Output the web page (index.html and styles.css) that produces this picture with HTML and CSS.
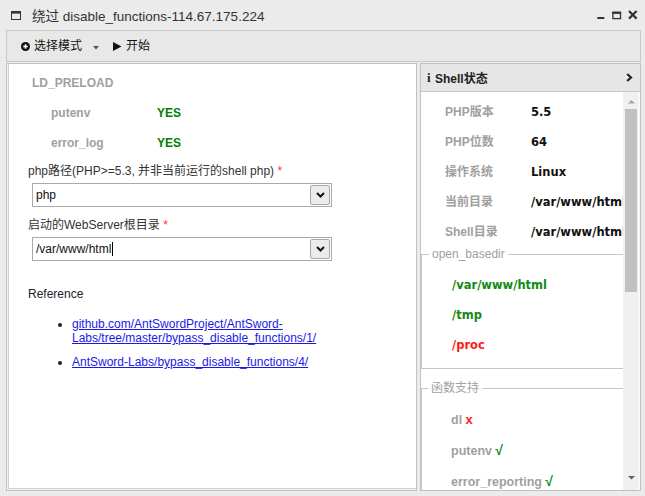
FILE: index.html
```html
<!DOCTYPE html>
<html>
<head>
<meta charset="utf-8">
<link rel="stylesheet" href="styles.css">
</head>
<body>
<div class="win">
  <div class="titlebar">
    <svg class="win-icon" width="10" height="9" viewBox="0 0 10 9"><rect x="0.5" y="0.5" width="9" height="8" fill="none" stroke="#333" stroke-width="1"/><rect x="0" y="0" width="10" height="2.6" fill="#333"/></svg>
    <span class="title">绕过 disable_functions-114.67.175.224</span>
    <svg class="controls" width="42" height="10" viewBox="0 0 42 10">
      <rect x="0.3" y="7" width="7" height="2" fill="#333"/>
      <rect x="15.9" y="2.4" width="7.6" height="6.2" fill="none" stroke="#333" stroke-width="1.3"/>
      <rect x="15.3" y="1.7" width="8.8" height="2.2" fill="#333"/>
      <path d="M32 1 L39.6 8.6 M39.6 1 L32 8.6" stroke="#333" stroke-width="2.2" fill="none"/>
    </svg>
  </div>

  <div class="toolbar">
    <svg class="tb-circle" width="9" height="9" viewBox="0 0 9 9"><circle cx="4.5" cy="4.5" r="4.5" fill="#111"/><path d="M4.5 2.2 V6.8 M2.2 4.5 H6.8" stroke="#fff" stroke-width="1.5"/></svg>
    <span class="tb-text">选择模式</span>
    <svg class="tb-caret" width="6" height="4" viewBox="0 0 6 4"><path d="M0 0 H6 L3 3.5 Z" fill="#555"/></svg>
    <svg class="tb-play" width="9" height="9" viewBox="0 0 9 9"><path d="M0 0 L8.5 4.5 L0 9 Z" fill="#111"/></svg>
    <span class="tb-text">开始</span>
  </div>

  <div class="main">
    <div class="left-cell">
      <div class="sec-title">LD_PRELOAD</div>
      <div class="kv"><span class="k">putenv</span><span class="yes">YES</span></div>
      <div class="kv"><span class="k">error_log</span><span class="yes">YES</span></div>

      <div class="flabel first">php路径(PHP&gt;=5.3, 并非当前运行的shell php) <span class="req">*</span></div>
      <div class="combo"><span class="cval">php</span><span class="cbtn"><svg width="9" height="6" viewBox="0 0 9 6"><path d="M1 1 L4.5 4.5 L8 1" stroke="#111" stroke-width="2" fill="none"/></svg></span></div>

      <div class="flabel">启动的WebServer根目录 <span class="req">*</span></div>
      <div class="combo"><span class="cval">/var/www/html<span class="caret"></span></span><span class="cbtn"><svg width="9" height="6" viewBox="0 0 9 6"><path d="M1 1 L4.5 4.5 L8 1" stroke="#111" stroke-width="2" fill="none"/></svg></span></div>

      <div class="ref-title">Reference</div>
      <ul class="refs">
        <li><a href="#">github.com/AntSwordProject/AntSword-Labs/tree/master/bypass_disable_functions/1/</a></li>
        <li><a href="#">AntSword-Labs/bypass_disable_functions/4/</a></li>
      </ul>
    </div>

    <div class="right-cell">
      <div class="rhead">
        <span class="info-i">i</span>
        <span class="rhead-title">Shell状态</span>
        <svg class="rhead-chev" width="7" height="9" viewBox="0 0 7 9"><path d="M1.2 1 L5 4.5 L1.2 8" stroke="#222" stroke-width="2.2" fill="none"/></svg>
      </div>
      <div class="rbody">
        <div class="rcontent">
          <div class="row"><span class="rk">PHP版本</span><span class="rv">5.5</span></div>
          <div class="row"><span class="rk">PHP位数</span><span class="rv">64</span></div>
          <div class="row"><span class="rk">操作系统</span><span class="rv">Linux</span></div>
          <div class="row"><span class="rk">当前目录</span><span class="rv">/var/www/html</span></div>
          <div class="row"><span class="rk">Shell目录</span><span class="rv">/var/www/html</span></div>

          <fieldset class="fs fs1">
            <legend>open_basedir</legend>
            <div class="item ok">/var/www/html</div>
            <div class="item ok">/tmp</div>
            <div class="item bad">/proc</div>
          </fieldset>

          <fieldset class="fs fs2">
            <legend>函数支持</legend>
            <div class="fn"><span class="fname">dl</span> <span class="no">x</span></div>
            <div class="fn"><span class="fname">putenv</span> <span class="chk">√</span></div>
            <div class="fn"><span class="fname">error_reporting</span> <span class="chk">√</span></div>
          </fieldset>
        </div>
        <div class="sbar">
          <svg class="sb-up" width="7" height="4" viewBox="0 0 7 4"><path d="M0 3.5 L3.5 0 L7 3.5 Z" fill="#a3a3a3"/></svg>
          <div class="sb-thumb"></div>
          <svg class="sb-down" width="7" height="4" viewBox="0 0 7 4"><path d="M0 0 L7 0 L3.5 3.5 Z" fill="#606060"/></svg>
        </div>
      </div>
    </div>
  </div>
</div>
</body>
</html>
```

FILE: styles.css
```css
* { box-sizing: border-box; }
html, body { margin: 0; padding: 0; }
body {
  width: 645px;
  height: 496px;
  overflow: hidden;
  background: #ebebeb;
  font-family: "Liberation Sans", Arial, "Noto Sans CJK SC", sans-serif;
  font-size: 12px;
  color: #222;
}
.win { display: flex; flex-direction: column; height: 496px; }

/* title bar */
.titlebar {
  flex: none;
  height: 30px;
  display: flex;
  align-items: center;
  padding: 0 6px 0 11px;
}
.win-icon { display: block; flex: none; }
.title { margin-left: 11px; font-size: 13.5px; color: #333; white-space: nowrap; }
.controls { display: block; margin-left: auto; flex: none; }

/* toolbar */
.toolbar {
  flex: none;
  height: 32px;
  margin: 0 4px 0 6px;
  border: 1px solid #c8c8c8;
  background: #e8e8e8;
  display: flex;
  align-items: center;
  padding-left: 14px;
  color: #111;
}
.tb-circle { display: block; flex: none; }
.tb-text { margin-left: 4px; font-size: 12px; line-height: 14px; }
.tb-caret { display: block; flex: none; margin-left: 11px; margin-top: 4px; }
.tb-play { display: block; flex: none; margin-left: 14px; }

/* main */
.main {
  flex: none;
  height: 428px;
  margin: 1px 4px 0 6px;
  display: flex;
  gap: 3px;
}
.left-cell {
  width: 411px;
  height: 428px;
  border: 1px solid #c2c2c2;
  background: #fff;
  padding-top: 4px;
  box-shadow: inset 1px -1px 0 #f2f2f2, inset 2px -2px 0 #d2d2d2;
}
.sec-title {
  line-height: 30px;
  padding-left: 25px;
  font-weight: bold;
  color: #a0a0a0;
}
.kv { display: flex; line-height: 30px; padding-left: 44px; font-weight: bold; }
.kv .k { width: 106px; color: #a0a0a0; }
.yes { color: #008000; }

.flabel { line-height: 16px; padding-left: 21px; margin-top: 10px; margin-bottom: 4px; color: #333; }
.flabel.first { margin-top: 5px; }
.req { color: #f33; }
.combo {
  margin-left: 25px;
  width: 300px;
  height: 24px;
  border: 1px solid #aaa;
  display: flex;
  align-items: center;
  justify-content: space-between;
  padding: 0 1px 0 3px;
  background: #fff;
}
.cval { color: #111; font-size: 12px; display: flex; align-items: center; }
.caret { display: inline-block; width: 1px; height: 14px; background: #000; margin-left: 1px; }
.cbtn {
  width: 20px;
  height: 20px;
  border: 1px solid #a8a8a8;
  border-radius: 2px;
  background: #ebebeb;
  display: flex;
  align-items: center;
  justify-content: center;
}
.cbtn svg { display: block; }

.ref-title { margin-top: 25px; padding-left: 21px; line-height: 16px; color: #222; }
.refs { margin: 15px 0 0 0; padding: 0 0 0 65px; line-height: 14px; }
.refs li { margin-bottom: 10px; }
.refs a { color: #1a1ae6; text-decoration: underline; }

/* right cell */
.right-cell {
  width: 221px;
  height: 428px;
  border: 1px solid #c2c2c2;
  display: flex;
  flex-direction: column;
  background: #fff;
}
.rhead {
  flex: none;
  height: 28px;
  border-bottom: 1px solid #c8c8c8;
  background: #e6e6e6;
  display: flex;
  align-items: center;
  padding: 0 7px 0 6px;
  font-weight: bold;
  color: #222;
}
.info-i { font-family: "Liberation Serif", serif; font-size: 13px; font-weight: bold; width: 5px; }
.rhead-title { margin-left: 3px; }
.rhead-chev { display: block; margin-left: auto; }

.rbody { flex: 1; display: flex; overflow: hidden; }
.rcontent { width: 202px; flex: none; overflow: hidden; padding-top: 5px; }
.row { display: flex; height: 30px; line-height: 30px; padding-left: 24px; white-space: nowrap; }
.rk { width: 86px; flex: none; font-weight: bold; color: #a0a0a0; }
.rv { font-family: "DejaVu Sans", Verdana, sans-serif; font-weight: bold; font-size: 11.5px; color: #111; }

.fs {
  margin: 0;
  padding: 9px 0 8px 0;
  border: 1px solid #c6c6c6;
  border-right: none;
  min-width: 0;
}
.fs legend {
  margin-left: 7px;
  padding: 0 3px;
  line-height: 14px;
  color: #a0a0a0;
  font-size: 12px;
}
.fs2 { margin-top: 12px; padding: 10px 0 0 0; border-bottom: none; }
.fs2 legend { margin-left: 6px; }
.item { padding-left: 30px; line-height: 30px; font-family: "DejaVu Sans", Verdana, sans-serif; font-weight: bold; font-size: 11.5px; white-space: nowrap; }
.ok { color: #138a13; }
.bad { color: #ff1a1a; }
.fn { padding-left: 29px; line-height: 30px; font-weight: bold; white-space: nowrap; }
.fname { color: #a0a0a0; font-size: 12.5px; }
.no { color: #ff1a1a; font-size: 13px; }
.chk { color: #138a13; font-size: 14px; }

.sbar {
  width: 17px;
  flex: none;
  background: #f0f0f0;
  border-right: 2px solid #f8f8f8;
  display: flex;
  flex-direction: column;
  align-items: center;
  padding: 8px 0 10px 0;
}
.sb-up { display: block; margin-left: 2px; }
.sb-thumb { width: 12px; height: 183px; margin-top: 5px; background: #c1c1c1; }
.sb-down { display: block; margin-top: auto; margin-left: 2px; }
```
